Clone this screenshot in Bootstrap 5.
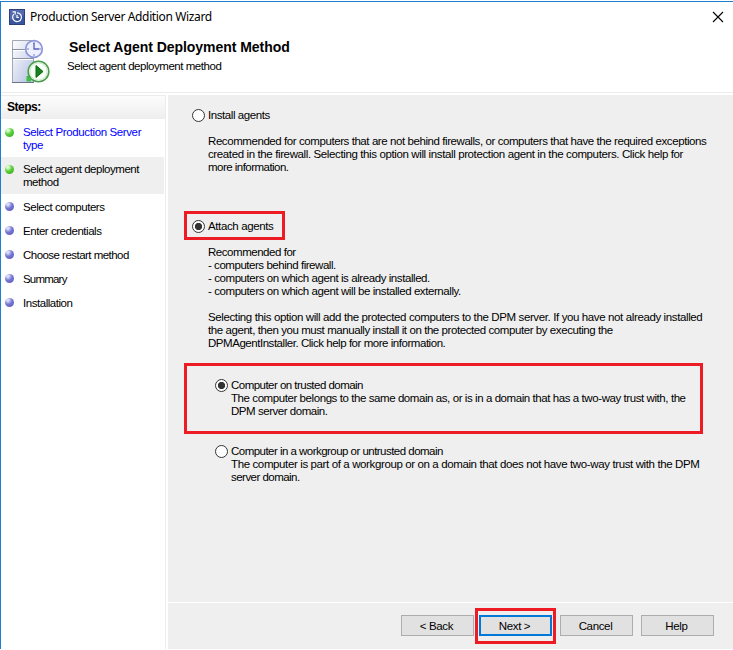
<!DOCTYPE html>
<html lang="en">
<head>
<meta charset="utf-8">
<title>Production Server Addition Wizard</title>
<link href="https://cdn.jsdelivr.net/npm/bootstrap@5.3.0/dist/css/bootstrap.min.css" rel="stylesheet">
<style>
body{width:733px;height:650px;overflow:hidden;background:#fff;color:#000;font:11.5px/13px "Liberation Sans",Arial,sans-serif;letter-spacing:-.46px}
.wizard{height:648px;margin-top:1px;border-top:1px solid #1c7fd2;border-left:1px solid #1c7fd2}
.titlebar{height:30px;padding:0 9px 0 8px}
.caption{font:12px/16px "Noto Sans","Open Sans",sans-serif;letter-spacing:-.36px;margin-left:5px}
.banner{height:61px;border-bottom:1px solid #ececec;padding:6px 0 0 10px}
.banner h1{font-size:14px;line-height:16px;letter-spacing:-.04px;margin:1px 0 5px 2px}
.heading-text{margin-left:16px}
.body-area{padding-top:2px;height:556px}
.steps{width:165px;border-top:1px solid #ececec;border-right:1px solid #ececec}
.steps-title{height:23px;line-height:23px;padding-left:6px;font-size:12px;letter-spacing:-.5px;background:linear-gradient(#fcfcfc,#eee)}
.step{padding:6px 0 6px 4px;width:163px}
.step.first{padding:7px 0 5px 4px}
.step.short{padding:7px 0 4px 4px}
.step.active{background:#efefef;color:#000;height:37px;padding-top:6px}
.visited{color:#00f}
.dot{width:9px;height:9px;margin:1px 9px 0 0;border-radius:50%;background:radial-gradient(circle at 32% 25%,#e0e2fa 0 8%,#7777d4 45%,#5552b4 100%)}
.dot.done{margin-top:2px;background:radial-gradient(circle at 32% 25%,#e4fbd9 0 8%,#58cf38 45%,#35a51c 100%)}
.pane{margin-left:2px;background:#efefef}
.options{height:507px;padding:0 0 0 16px}
.form-check-input[type=radio]{width:13px;height:13px;margin:0 3px 0 0;border:1px solid #333;background:#fff;float:none;flex:none;box-shadow:none}
.form-check-input[type=radio]:checked{background:radial-gradient(circle,#333 0 3.3px,#fff 4px)}
.callout{border:3px solid #ed1c24}
.ln{display:block;white-space:nowrap}
.wide{letter-spacing:-.38px}
.mid{letter-spacing:-.425px}
.tight{letter-spacing:-.53px}
.tighter{letter-spacing:-.8px}
.opt1{margin:14px 0 13px 8px}
.desc{margin-left:24px}
.c1{width:101px;height:29px;margin-top:37px;padding:1px 0 0 5px}
.d2{margin-top:6px}
.c2{width:519px;height:71px;margin-top:13px;padding:13px 0 0 28px}
.c3{margin:11px 0 0 31px}
.sub{margin-left:16px}
.footer-bar{border-top:1px solid #fff;padding:5px 0 0 233px}
.wbtn{width:73px;height:21px;margin-top:7px;padding:0 2px 0 0;border:1px solid #adadad;border-radius:0;background:#e1e1e1;color:#000;font-size:11.5px;line-height:20px;letter-spacing:-.35px}
.wbtn.default{border:2px solid #0078d7;line-height:18px;margin:0;display:block}
.next-callout{width:81px;height:36px;padding:4px 0 0 1px;margin:0 4px 0 1px}
</style>
</head>
<body>
<div class="wizard">
<div class="titlebar d-flex align-items-center">
<svg width="16" height="16" viewBox="0 0 16 16"><rect x=".5" y=".5" width="15" height="15" fill="#3a559f" stroke="#2b427f"/><path d="M1 1h14v5L1 11z" fill="#6c82be" opacity=".5"/><path d="M4.8 5.2A4.4 4.4 0 1 0 8 3.8M3.6 2.8h2.6v2.6M8 6v2.500h2" fill="none" stroke="#fff" stroke-width="1.2"/></svg>
<span class="caption">Production Server Addition Wizard</span>
<svg class="ms-auto" width="12" height="12" viewBox="0 0 12 12"><path d="M1 1l10 10M11 1L1 11" stroke="#000" stroke-width="1.1"/></svg>
</div>
<header class="banner d-flex">
<svg width="40" height="46" viewBox="0 0 40 46"><defs><linearGradient id="g" x2="1" y2="1"><stop stop-color="#fff"/><stop offset="1" stop-color="#b3bfe2"/></linearGradient></defs>
<path d="M1.5 2.500h21v42h-21z" fill="url(#g)" stroke="#a2a7b4"/><path d="M1 11.500h22M1 20.500h22" stroke="#8b91a1"/><path d="M2 12.500h20M2 21.500h20" stroke="#fff"/><path d="M1 44.500h22" stroke="#6e7381"/><path d="M17 38v4h3" fill="none" stroke="#3dbf43" stroke-width="3"/>
<circle cx="23" cy="11" r="8.3" fill="#edf0ff" stroke="#8e96d9" stroke-width="1.7"/><path d="M23 4v2M23 16v2M16 11h2M28 11h2" stroke="#7780c5"/><path d="M23 5v6h5" fill="none" stroke="#5960b4" stroke-width="1.3"/>
<circle cx="27.500" cy="33.500" r="10.3" fill="#fff" stroke="#4b9c4b" stroke-width="1.6"/><circle cx="27.500" cy="33.500" r="8.600" fill="#f7fff6" stroke="#cae7c8"/><path d="M25 27.500v12l7-6z" fill="#16811e" stroke="#0b6813"/></svg>
<div class="heading-text"><h1 class="fw-bold"><span class="ln">Select Agent Deployment Method</span></h1><span class="ln">Select agent deployment method</span></div>
</header>
<div class="body-area d-flex">
<nav class="steps flex-shrink-0">
<div class="steps-title fw-bold">Steps:</div>
<div class="step first d-flex"><i class="dot done"></i><span class="visited"><span class="ln wide">Select Production Server</span><span class="ln">type</span></span></div>
<div class="step active d-flex"><i class="dot done"></i><span><span class="ln">Select agent deployment</span><span class="ln">method</span></span></div>
<div class="step short d-flex"><i class="dot"></i>Select computers</div>
<div class="step short d-flex"><i class="dot"></i>Enter credentials</div>
<div class="step short d-flex tight"><i class="dot"></i>Choose restart method</div>
<div class="step short d-flex tighter"><i class="dot"></i>Summary</div>
<div class="step short d-flex"><i class="dot"></i>Installation</div>
</nav>
<main class="pane flex-grow-1">
<div class="options d-flex flex-column">
<label class="opt1 d-flex mid"><input class="form-check-input" type="radio" name="method">Install agents</label>
<div class="desc"><span class="ln mid">Recommended for computers that are not behind firewalls, or computers that have the required exceptions</span><span class="ln wide">created in the firewall. Selecting this option will install protection agent in the computers. Click help for</span><span class="ln tight">more information.</span></div>
<label class="callout c1 d-flex align-items-center wide"><input class="form-check-input" type="radio" name="method" checked>Attach agents</label>
<div class="desc d2"><span class="ln">Recommended for</span><span class="ln">- computers behind firewall.</span><span class="ln mid">- computers on which agent is already installed.</span><span class="ln mid">- computers on which agent will be installed externally.</span><br><span class="ln wide">Selecting this option will add the protected computers to the DPM server. If you have not already installed</span><span class="ln mid">the agent, then you must manually install it on the protected computer by executing the</span><span class="ln">DPMAgentInstaller. Click help for more information.</span></div>
<div class="callout c2"><label class="d-flex tight"><input class="form-check-input" type="radio" name="trust" checked>Computer on trusted domain</label><div class="sub"><span class="ln mid">The computer belongs to the same domain as, or is in a domain that has a two-way trust with, the</span><span class="ln">DPM server domain.</span></div></div>
<div class="c3"><label class="d-flex tight"><input class="form-check-input" type="radio" name="trust">Computer in a workgroup or untrusted domain</label><div class="sub"><span class="ln wide">The computer is part of a workgroup or on a domain that does not have two-way trust with the DPM</span><span class="ln tight">server domain.</span></div></div>
</div>
<footer class="footer-bar d-flex align-items-start">
<button class="btn wbtn">&lt; Back</button>
<div class="callout next-callout"><button class="btn wbtn default">Next &gt;</button></div>
<button class="btn wbtn">Cancel</button>
<button class="btn wbtn ms-2">Help</button>
</footer>
</main>
</div>
</div>
</body>
</html>
